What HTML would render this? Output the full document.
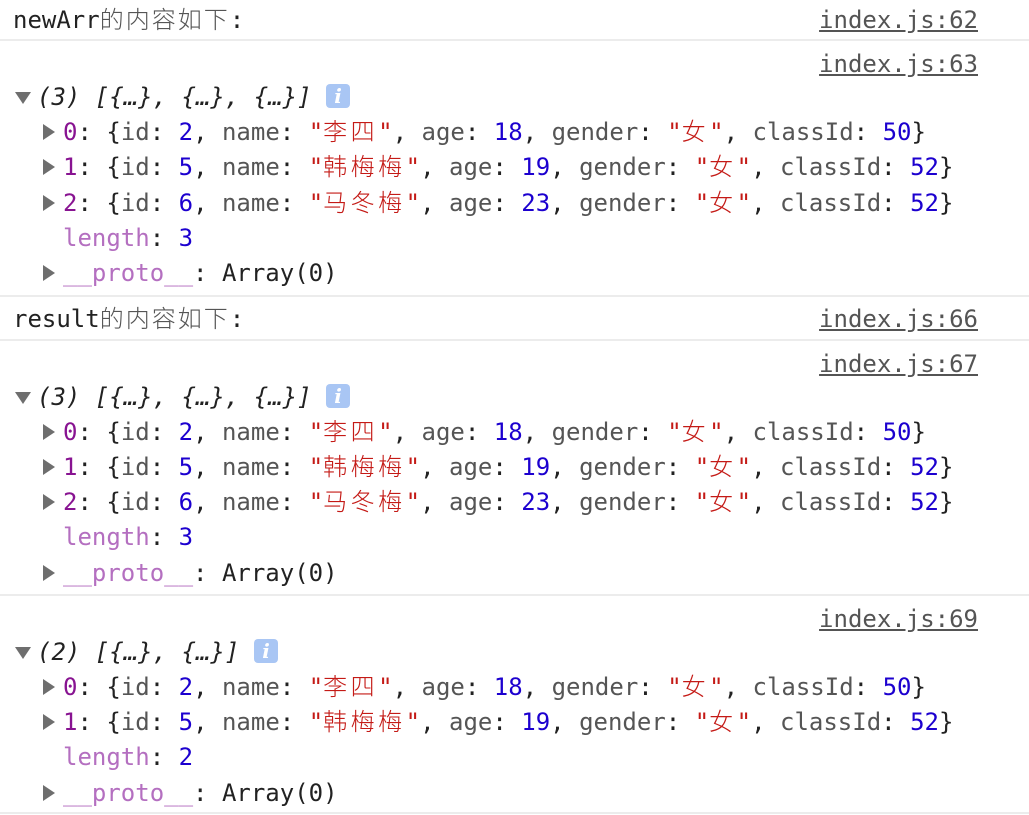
<!DOCTYPE html>
<html><head><meta charset="utf-8"><style>
html,body{margin:0;padding:0;background:#fff;}
body{width:1029px;height:815px;position:relative;overflow:hidden;font-family:"DejaVu Sans Mono","Liberation Mono","Noto Sans CJK SC",monospace;font-size:24px;color:#222;}
.l{position:absolute;left:0;height:35px;line-height:35px;white-space:pre;}
.sep{position:absolute;left:0;width:1029px;height:2px;background:#ececec;}
.src{position:absolute;right:51px;height:35px;line-height:35px;color:#545454;text-decoration:underline;white-space:pre;}
.c{font-family:"Noto Sans CJK SC",sans-serif;letter-spacing:3.5px;line-height:0;font-weight:300;}
.h .c{color:#555;letter-spacing:2px;}
.idx{color:#881391}.num{color:#1c00cf}.str{color:#c41a16}.k{color:#555}.dim{color:#b46fc0}
.it{font-style:italic}
.tri{position:absolute;}
.info{position:absolute;width:24px;height:24px;border-radius:4px;background:#a9c6f4;color:#fff;font-family:"DejaVu Serif",serif;font-style:italic;font-weight:bold;font-size:20px;line-height:24px;text-align:center;}
</style></head><body>

<!-- block 1 -->
<div class="l h" style="top:3px;left:13px">newArr<span class="c">的内容如下</span>:</div>
<div class="src" style="top:3px">index.js:62</div>
<div class="sep" style="top:39px"></div>
<div class="src" style="top:47px">index.js:63</div>
<svg class="tri" style="left:15px;top:92px" width="16" height="12"><path d="M0 0H16L8 12Z" fill="#6e6e6e"/></svg>
<div class="l it" style="top:80px;left:37px">(3) [{…}, {…}, {…}]</div>
<div class="info" style="left:326px;top:84px">i</div>
<svg class="tri" style="left:43px;top:124px" width="12" height="16"><path d="M0 0V16L12 8Z" fill="#6e6e6e"/></svg>
<div class="l" style="top:115px;left:63px"><span class="idx">0</span>: {<span class="k">id</span>: <span class="num">2</span>, <span class="k">name</span>: <span class="str">"<span class="c">李四</span>"</span>, <span class="k">age</span>: <span class="num">18</span>, <span class="k">gender</span>: <span class="str">"<span class="c">女</span>"</span>, <span class="k">classId</span>: <span class="num">50</span>}</div>
<svg class="tri" style="left:43px;top:159px" width="12" height="16"><path d="M0 0V16L12 8Z" fill="#6e6e6e"/></svg>
<div class="l" style="top:150px;left:63px"><span class="idx">1</span>: {<span class="k">id</span>: <span class="num">5</span>, <span class="k">name</span>: <span class="str">"<span class="c">韩梅梅</span>"</span>, <span class="k">age</span>: <span class="num">19</span>, <span class="k">gender</span>: <span class="str">"<span class="c">女</span>"</span>, <span class="k">classId</span>: <span class="num">52</span>}</div>
<svg class="tri" style="left:43px;top:195px" width="12" height="16"><path d="M0 0V16L12 8Z" fill="#6e6e6e"/></svg>
<div class="l" style="top:186px;left:63px"><span class="idx">2</span>: {<span class="k">id</span>: <span class="num">6</span>, <span class="k">name</span>: <span class="str">"<span class="c">马冬梅</span>"</span>, <span class="k">age</span>: <span class="num">23</span>, <span class="k">gender</span>: <span class="str">"<span class="c">女</span>"</span>, <span class="k">classId</span>: <span class="num">52</span>}</div>
<div class="l" style="top:221px;left:63px"><span class="dim">length</span>: <span class="num">3</span></div>
<svg class="tri" style="left:43px;top:265px" width="12" height="16"><path d="M0 0V16L12 8Z" fill="#6e6e6e"/></svg>
<div class="l" style="top:256px;left:63px"><span class="dim">__proto__</span>: Array(0)</div>
<div class="sep" style="top:295px"></div>

<!-- block 2 -->
<div class="l h" style="top:302px;left:13px">result<span class="c">的内容如下</span>:</div>
<div class="src" style="top:302px">index.js:66</div>
<div class="sep" style="top:339px"></div>
<div class="src" style="top:347px">index.js:67</div>
<svg class="tri" style="left:15px;top:392px" width="16" height="12"><path d="M0 0H16L8 12Z" fill="#6e6e6e"/></svg>
<div class="l it" style="top:380px;left:37px">(3) [{…}, {…}, {…}]</div>
<div class="info" style="left:326px;top:384px">i</div>
<svg class="tri" style="left:43px;top:424px" width="12" height="16"><path d="M0 0V16L12 8Z" fill="#6e6e6e"/></svg>
<div class="l" style="top:415px;left:63px"><span class="idx">0</span>: {<span class="k">id</span>: <span class="num">2</span>, <span class="k">name</span>: <span class="str">"<span class="c">李四</span>"</span>, <span class="k">age</span>: <span class="num">18</span>, <span class="k">gender</span>: <span class="str">"<span class="c">女</span>"</span>, <span class="k">classId</span>: <span class="num">50</span>}</div>
<svg class="tri" style="left:43px;top:459px" width="12" height="16"><path d="M0 0V16L12 8Z" fill="#6e6e6e"/></svg>
<div class="l" style="top:450px;left:63px"><span class="idx">1</span>: {<span class="k">id</span>: <span class="num">5</span>, <span class="k">name</span>: <span class="str">"<span class="c">韩梅梅</span>"</span>, <span class="k">age</span>: <span class="num">19</span>, <span class="k">gender</span>: <span class="str">"<span class="c">女</span>"</span>, <span class="k">classId</span>: <span class="num">52</span>}</div>
<svg class="tri" style="left:43px;top:494px" width="12" height="16"><path d="M0 0V16L12 8Z" fill="#6e6e6e"/></svg>
<div class="l" style="top:485px;left:63px"><span class="idx">2</span>: {<span class="k">id</span>: <span class="num">6</span>, <span class="k">name</span>: <span class="str">"<span class="c">马冬梅</span>"</span>, <span class="k">age</span>: <span class="num">23</span>, <span class="k">gender</span>: <span class="str">"<span class="c">女</span>"</span>, <span class="k">classId</span>: <span class="num">52</span>}</div>
<div class="l" style="top:520px;left:63px"><span class="dim">length</span>: <span class="num">3</span></div>
<svg class="tri" style="left:43px;top:565px" width="12" height="16"><path d="M0 0V16L12 8Z" fill="#6e6e6e"/></svg>
<div class="l" style="top:556px;left:63px"><span class="dim">__proto__</span>: Array(0)</div>
<div class="sep" style="top:594px"></div>

<!-- block 3 -->
<div class="src" style="top:602px">index.js:69</div>
<svg class="tri" style="left:15px;top:647px" width="16" height="12"><path d="M0 0H16L8 12Z" fill="#6e6e6e"/></svg>
<div class="l it" style="top:635px;left:37px">(2) [{…}, {…}]</div>
<div class="info" style="left:254px;top:639px">i</div>
<svg class="tri" style="left:43px;top:679px" width="12" height="16"><path d="M0 0V16L12 8Z" fill="#6e6e6e"/></svg>
<div class="l" style="top:670px;left:63px"><span class="idx">0</span>: {<span class="k">id</span>: <span class="num">2</span>, <span class="k">name</span>: <span class="str">"<span class="c">李四</span>"</span>, <span class="k">age</span>: <span class="num">18</span>, <span class="k">gender</span>: <span class="str">"<span class="c">女</span>"</span>, <span class="k">classId</span>: <span class="num">50</span>}</div>
<svg class="tri" style="left:43px;top:714px" width="12" height="16"><path d="M0 0V16L12 8Z" fill="#6e6e6e"/></svg>
<div class="l" style="top:705px;left:63px"><span class="idx">1</span>: {<span class="k">id</span>: <span class="num">5</span>, <span class="k">name</span>: <span class="str">"<span class="c">韩梅梅</span>"</span>, <span class="k">age</span>: <span class="num">19</span>, <span class="k">gender</span>: <span class="str">"<span class="c">女</span>"</span>, <span class="k">classId</span>: <span class="num">52</span>}</div>
<div class="l" style="top:740px;left:63px"><span class="dim">length</span>: <span class="num">2</span></div>
<svg class="tri" style="left:43px;top:785px" width="12" height="16"><path d="M0 0V16L12 8Z" fill="#6e6e6e"/></svg>
<div class="l" style="top:776px;left:63px"><span class="dim">__proto__</span>: Array(0)</div>
<div class="sep" style="top:812px"></div>
</body></html>
